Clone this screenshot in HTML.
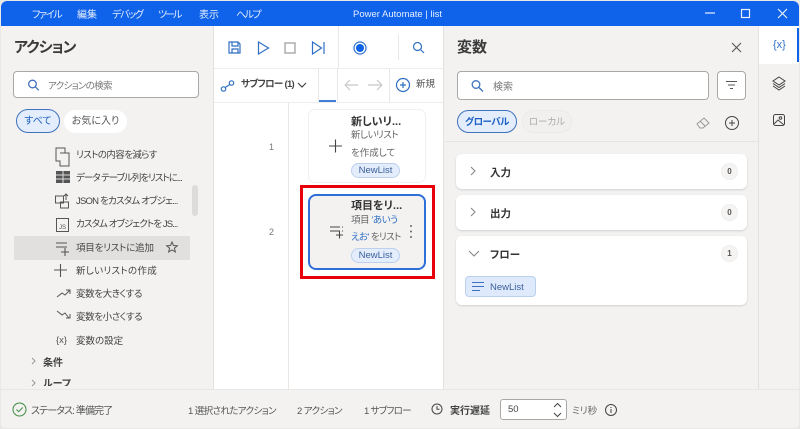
<!DOCTYPE html>
<html lang="ja"><head><meta charset="utf-8">
<style>
*{box-sizing:border-box}
html,body{margin:0;padding:0;width:800px;height:429px;overflow:hidden;background:#e9e8e6}
body{font-family:"Liberation Sans","Noto Sans CJK JP",sans-serif;color:#323130;font-size:9px;font-feature-settings:"palt"}
.a{position:absolute;white-space:nowrap}
svg{position:absolute;overflow:visible;fill:none}
.pill{position:absolute;border-radius:12px;text-align:center}
.item{position:absolute;left:76px;font-size:9.5px;color:#444;white-space:nowrap;line-height:12px}
.card{position:absolute;background:#fff;border-radius:6px;left:456px;width:291px;box-shadow:0 1px 2px rgba(0,0,0,.14)}
.badge{position:absolute;left:721px;width:17px;height:17px;border-radius:50%;background:#f5f4f3;border:1px solid #eee;text-align:center;font-size:8px;line-height:15px;color:#555;font-weight:bold}
.tag{position:absolute;left:351px;width:49px;height:15px;border-radius:8px;background:#e3edfb;border:1px solid #bcd0ee;text-align:center;font-size:9.5px;line-height:13px;color:#3c5f9c}
.m{font-size:10px;color:#e6efff;line-height:13px;top:9px}
.k{letter-spacing:-1.300px}
</style></head><body>
<div class="a" style="left:1px;top:1px;width:798px;height:427px;background:#f3f2f1;border-radius:7px 7px 4px 4px;overflow:hidden"></div>
<div class="a" style="left:1px;top:1px;width:798px;height:25px;background:#0f62ea;border-radius:6px 6px 0 0"></div>
<div class="a m k" style="left:32px">ファイル</div>
<div class="a m" style="left:77px">編集</div>
<div class="a m k" style="left:112px">デバッグ</div>
<div class="a m k" style="left:158px;letter-spacing:-2px">ツール</div>
<div class="a m" style="left:199px">表示</div>
<div class="a m k" style="left:236px;letter-spacing:-1.500px">ヘルプ</div>
<div class="a" style="left:353px;top:8px;font-size:9.5px;color:#e6efff;line-height:13px">Power Automate | list</div>
<svg style="left:0;top:0" width="800" height="30" stroke="#e8f0ff" stroke-width="1.200"><path d="M705 13h10"/><rect x="741.500" y="9.500" width="8" height="8"/><path d="M778 9l9 9M787 9l-9 9"/></svg>

<!-- Left panel -->
<div class="a" style="left:14px;top:38px;font-size:15px;font-weight:bold;color:#3a3a3a;line-height:20px;letter-spacing:-1px">アクション</div>
<div class="a" style="left:13px;top:71px;width:186px;height:27px;background:#fff;border:1px solid #a9a8a7;border-radius:4px"></div>
<svg style="left:27px;top:79px" width="14" height="14" stroke="#3f72bd" stroke-width="1.300"><circle cx="5.500" cy="5" r="3.800"/><path d="M8.300 7.800l3.500 3.500"/></svg>
<div class="a" style="left:48px;top:80px;font-size:9.500px;color:#777;line-height:13px;letter-spacing:-.7px">アクションの検索</div>
<div class="pill" style="left:16px;top:109px;width:44px;height:24px;background:#e3edfb;border:1px solid #3f72bd;font-size:10px;line-height:24px;color:#1d5fc4">すべて</div>
<div class="pill" style="left:64px;top:110px;width:63px;height:23px;background:#fff;font-size:10px;line-height:24px;color:#555">お気に入り</div>

<div class="a" style="left:14px;top:236px;width:176px;height:24px;background:#e1e0df"></div>
<div class="a" style="left:192px;top:185px;width:6px;height:31px;background:#dddcdb;border-radius:3px"></div>

<div class="item" style="top:150px;letter-spacing:-.6px">リストの内容を減らす</div>
<div class="item" style="top:173px;letter-spacing:-1px">データ テーブル列をリストに...</div>
<div class="item" style="top:196px;letter-spacing:-.8px">JSON をカスタム オブジェ...</div>
<div class="item" style="top:219px;letter-spacing:-.9px">カスタム オブジェクトを JS...</div>
<div class="item" style="top:243px;letter-spacing:-.2px">項目をリストに追加</div>
<div class="item" style="top:266px;letter-spacing:.3px">新しいリストの作成</div>
<div class="item" style="top:289px;letter-spacing:-.4px">変数を大きくする</div>
<div class="item" style="top:312px;letter-spacing:-.4px">変数を小さくする</div>
<div class="item" style="top:336px">変数の設定</div>
<div class="a" style="left:43px;top:358px;font-size:10px;font-weight:bold;color:#444;line-height:12px">条件</div>
<div class="a" style="left:43px;top:379px;font-size:10px;font-weight:bold;color:#444;line-height:12px;height:7px;overflow:hidden">ループ</div>

<svg style="left:0;top:140px" width="210" height="245" stroke="#555" stroke-width="1">
<path d="M56 8h9v5h4v13h-9v-5h-4zM60 13h9"/>
<rect x="56" y="31" width="14" height="12" fill="#555" stroke="none"/><path d="M63 31v12M56 35h14M56 39h14" stroke="#ddd"/>
<rect x="55.500" y="56" width="8" height="7"/><rect x="60.500" y="62" width="8" height="6"/><path d="M66 54v6M64 56l2-2 2 2"/>
<rect x="56.500" y="78.500" width="12" height="13"/><text x="59" y="89" font-size="6" fill="#555" stroke="none">JS</text>
<path d="M56 103h11M56 107h11M61 112h8M65 108v8" stroke-width="1.100"/>
<path d="M172 102l1.500 3.500 3.800.3-2.900 2.400 1 3.700-3.400-2-3.400 2 1-3.700-2.900-2.400 3.800-.3z"/>
<path d="M54 130h13M60.500 124v13" stroke-width="1.100"/>
<path d="M57 157l5-4 3 2 5-5M66 150h4v4"/>
<path d="M57 171l5 4 3-2 4 5M70 174v4h-4"/>
<path d="M32 218l3 3-3 3M32 240l3 3-3 3" stroke="#999"/>
</svg>
<div class="a" style="left:56px;top:335px;font-size:9.500px;color:#555;line-height:12px">{x}</div>

<!-- Center panel -->
<div class="a" style="left:214px;top:26px;width:229px;height:363px;background:#fff"></div>
<div class="a" style="left:214px;top:68px;width:229px;height:1px;background:#eeedec"></div>
<div class="a" style="left:214px;top:102px;width:229px;height:1px;background:#eeedec"></div>
<div class="a" style="left:338px;top:26px;width:1px;height:42px;background:#e8e7e6"></div>
<div class="a" style="left:398px;top:34px;width:1px;height:26px;background:#e8e7e6"></div>
<div class="a" style="left:318px;top:69px;width:1px;height:33px;background:#e8e7e6"></div>
<div class="a" style="left:337px;top:69px;width:1px;height:33px;background:#e8e7e6"></div>
<div class="a" style="left:389px;top:69px;width:1px;height:33px;background:#e8e7e6"></div>
<div class="a" style="left:319px;top:100px;width:17px;height:2px;background:#3f7fd8"></div>
<div class="a" style="left:288px;top:103px;width:1px;height:286px;background:#e8e7e6"></div>
<svg style="left:214px;top:25px" width="229" height="80" stroke="#2f6fc4" stroke-width="1.200">
<path d="M15 17h9l2 2v9H15zM18 17v4h6v-4M18 28v-4h6v4"/>
<path d="M44.500 17l10 6-10 6z"/>
<rect x="71" y="18" width="10" height="10" stroke="#999"/>
<path d="M98.500 17l9 6-9 6zM110 17v12"/>
<circle cx="146" cy="23" r="6"/><circle cx="146" cy="23" r="4" fill="#0f62ea" stroke="none"/>
<circle cx="203.500" cy="21.500" r="4"/><path d="M206.500 24.500l3.500 3.500"/>
<circle cx="9.500" cy="64" r="2.200"/><circle cx="17.500" cy="58" r="2.200"/><path d="M11 62.500l5-3"/>
<path d="M131 60h13M131 60l5-5M131 60l5 5M154 60h14M168 60l-5-5M168 60l-5 5" stroke="#c8c8c8"/>
<circle cx="189" cy="60" r="6.500"/><path d="M186 60h6M189 57v6"/>
<path d="M84 58l4 4 4-4" stroke="#444"/>
</svg>
<div class="a" style="left:241px;top:79px;font-size:9.500px;font-weight:bold;color:#444;line-height:12px;letter-spacing:-.7px">サブフロー (1)</div>
<div class="a" style="left:416px;top:79px;font-size:9.500px;color:#555;line-height:12px">新規</div>
<div class="a" style="left:269px;top:141px;font-size:9px;color:#777;line-height:12px">1</div>
<div class="a" style="left:269px;top:226px;font-size:9px;color:#777;line-height:12px">2</div>

<div class="a" style="left:308px;top:109px;width:118px;height:74px;background:#fff;border:1px solid #f1f0ef;border-radius:7px"></div>
<svg style="left:327px;top:137px" width="18" height="18" stroke="#444" stroke-width="1.100"><path d="M2 9h13M8.500 2.500v13"/></svg>
<div class="a" style="left:351px;top:115px;font-size:11px;font-weight:bold;color:#333;line-height:14px">新しいリ...</div>
<div class="a" style="left:351px;top:130px;font-size:9.500px;color:#666;line-height:12px;letter-spacing:-.5px">新しいリスト</div>
<div class="a" style="left:351px;top:148px;font-size:9.500px;color:#666;line-height:12px">を作成して</div>
<div class="tag" style="top:163px">NewList</div>

<div class="a" style="left:300px;top:185px;width:135px;height:94px;border:3px solid #e8000b"></div>
<div class="a" style="left:308px;top:194px;width:118px;height:76px;background:#f3f2f1;border:2px solid #2f6fd8;border-radius:8px"></div>
<svg style="left:328px;top:224px" width="20" height="20" stroke="#444" stroke-width="1.100"><path d="M2 3h10M2 7h10M8 11h7M11.500 7.500v7"/><path d="M14 3h1M14 7h1"/></svg>
<div class="a" style="left:351px;top:199px;font-size:11px;font-weight:bold;color:#333;line-height:14px">項目をリ...</div>
<div class="a" style="left:351px;top:215px;font-size:9.500px;color:#666;line-height:12px;letter-spacing:-.4px">項目 <span style="color:#2f6fc4">'あいう</span></div>
<div class="a" style="left:351px;top:232px;font-size:9.500px;color:#666;line-height:12px;letter-spacing:-.6px"><span style="color:#2f6fc4">えお'</span> をリスト</div>
<div class="tag" style="top:248px">NewList</div>
<svg style="left:408px;top:224px" width="6" height="16"><circle cx="3" cy="2" r="1" fill="#666"/><circle cx="3" cy="7.500" r="1" fill="#666"/><circle cx="3" cy="13" r="1" fill="#666"/></svg>

<!-- Right panel -->
<div class="a" style="left:457px;top:38px;font-size:15px;font-weight:bold;color:#3a3a3a;line-height:20px">変数</div>
<svg style="left:730px;top:41px" width="14" height="14" stroke="#555" stroke-width="1.100"><path d="M2 2l9 9M11 2l-9 9"/></svg>
<div class="a" style="left:457px;top:71px;width:252px;height:29px;background:#fff;border:1px solid #a9a8a7;border-radius:4px"></div>
<svg style="left:471px;top:80px" width="14" height="14" stroke="#3f72bd" stroke-width="1.300"><circle cx="5" cy="4.500" r="3.800"/><path d="M8 7.500l4 4"/></svg>
<div class="a" style="left:493px;top:81px;font-size:10px;color:#777;line-height:14px">検索</div>
<div class="a" style="left:717px;top:71px;width:29px;height:29px;background:#fff;border:1px solid #a9a8a7;border-radius:4px"></div>
<svg style="left:725px;top:80px" width="14" height="12" stroke="#555"><path d="M1 1.500h11M3 5h7M5 8.500h3"/></svg>
<div class="pill" style="left:457px;top:110px;width:60px;height:23px;background:#e3edfb;border:1px solid #3f72bd;font-size:9.500px;font-weight:bold;line-height:23px;color:#1d5fc4;letter-spacing:-.5px">グローバル</div>
<div class="pill" style="left:522px;top:110px;width:50px;height:23px;background:#f1f0ef;border:1px solid #ebeaea;font-size:9.500px;line-height:23px;color:#aaa">ローカル</div>
<svg style="left:695px;top:115px" width="50" height="16" stroke="#999"><path d="M2 9l7-6 5 5-6 5H5zM5 6l5 5"/><circle cx="37" cy="8" r="6.500" stroke="#444"/><path d="M34 8h6M37 5v6" stroke="#444"/></svg>
<div class="a" style="left:445px;top:141px;width:314px;height:1px;background:#e6e5e4"></div>

<div class="card" style="top:154px;height:35px"></div>
<div class="card" style="top:195px;height:35px"></div>
<div class="card" style="top:236px;height:69px"></div>
<svg style="left:468px;top:165px" width="16" height="100" stroke="#888" stroke-width="1.100"><path d="M3 2l4 4-4 4M3 43l4 4-4 4M1 86l5 5 5-5"/></svg>
<div class="a" style="left:490px;top:166px;font-size:10.500px;font-weight:bold;color:#333;line-height:14px">入力</div>
<div class="a" style="left:490px;top:207px;font-size:10.500px;font-weight:bold;color:#333;line-height:14px">出力</div>
<div class="a" style="left:490px;top:248px;font-size:10.500px;font-weight:bold;color:#333;line-height:14px">フロー</div>
<div class="badge" style="top:163px">0</div>
<div class="badge" style="top:204px">0</div>
<div class="badge" style="top:245px">1</div>
<div class="a" style="left:465px;top:276px;width:71px;height:21px;background:#deeafb;border:1px solid #bcd0ee;border-radius:4px"></div>
<svg style="left:472px;top:281px" width="14" height="11" stroke="#3f72bd" stroke-width="1.100"><path d="M0 1.500h12M0 5.500h12M0 9.500h8"/></svg>
<div class="a" style="left:490px;top:281px;font-size:9.500px;color:#3c5f9c;line-height:13px">NewList</div>

<!-- Right rail -->
<div class="a" style="left:759px;top:26px;width:40px;height:38px;background:#fff"></div>
<div class="a" style="left:797px;top:28px;width:2px;height:34px;background:#0f62ea"></div>
<div class="a" style="left:773px;top:39px;font-size:11px;color:#2f6fc4;line-height:13px">{x}</div>
<svg style="left:771px;top:75px" width="18" height="60" stroke="#444" stroke-width="1"><path d="M8 2l6 4-6 4-6-4zM2 8.500l6 4 6-4M2 11l6 4 6-4"/><rect x="2.500" y="39.500" width="11" height="11" rx="2"/><circle cx="9.500" cy="43" r="1.300"/><path d="M3 49l4-4 6 5"/></svg>

<!-- Status bar -->
<div class="a" style="left:1px;top:389px;width:798px;height:39px;background:#f3f2f1;border-top:1px solid #e8e7e6;border-radius:0 0 4px 4px"></div>
<div class="a" style="left:213px;top:26px;width:1px;height:363px;background:#e2e1e0"></div>
<div class="a" style="left:443px;top:26px;width:1px;height:363px;background:#e2e1e0"></div>
<div class="a" style="left:758px;top:26px;width:1px;height:363px;background:#e2e1e0"></div>
<svg style="left:12px;top:402px" width="16" height="16" stroke="#3d8b40" stroke-width="1"><circle cx="7.500" cy="7.500" r="6.500"/><path d="M4.500 7.500l2.200 2.200 4-4.200"/></svg>
<div class="a" style="left:31px;top:405px;font-size:10px;color:#555;line-height:13px;letter-spacing:-.9px">ステータス: 準備完了</div>
<div class="a" style="left:188px;top:405px;font-size:9.500px;color:#555;line-height:13px;letter-spacing:-.6px">1 選択されたアクション</div>
<div class="a" style="left:297px;top:405px;font-size:9.500px;color:#555;line-height:13px;letter-spacing:-.6px">2 アクション</div>
<div class="a" style="left:364px;top:405px;font-size:9.500px;color:#555;line-height:13px;letter-spacing:-.7px">1 サブフロー</div>
<svg style="left:431px;top:403px" width="13" height="13" stroke="#444"><circle cx="6" cy="6" r="5"/><path d="M6 3v3.300h2.500"/></svg>
<div class="a" style="left:450px;top:405px;font-size:10px;font-weight:bold;color:#444;line-height:13px">実行遅延</div>
<div class="a" style="left:500px;top:399px;width:67px;height:21px;background:#fff;border:1px solid #a9a8a7;border-radius:3px"></div>
<div class="a" style="left:508px;top:404px;font-size:9.500px;color:#444;line-height:12px">50</div>
<svg style="left:552px;top:401px" width="12" height="18" stroke="#444"><path d="M2 6l3.500-3.500L9 6M2 12l3.500 3.500L9 12"/></svg>
<div class="a" style="left:572px;top:405px;font-size:9.500px;color:#666;line-height:13px">ミリ秒</div>
<svg style="left:604px;top:403px" width="14" height="14" stroke="#444"><circle cx="7" cy="7" r="5.500"/><path d="M7 6v4M7 4v1"/></svg>
</body></html>
